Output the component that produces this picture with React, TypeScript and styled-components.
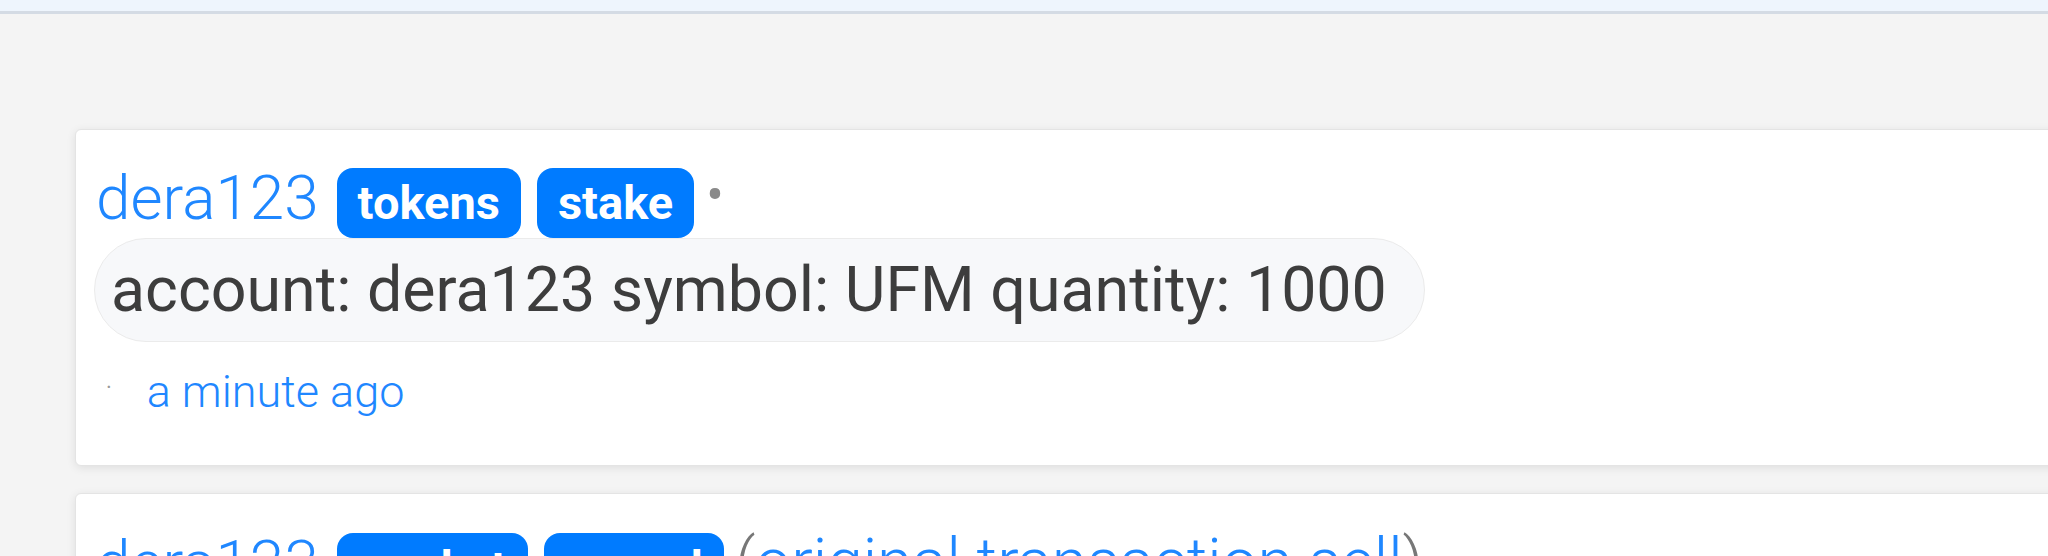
import React from "react";
import styled, { createGlobalStyle } from "styled-components";

const Global = createGlobalStyle`
  html, body { margin: 0; padding: 0; }
  body {
    background: #f4f4f4;
    overflow: hidden;
    font-family: Roboto, "Liberation Sans", Arial, sans-serif;
  }
`;

const TopBar = styled.div`
  height: 11px;
  background: #eef5fd;
  border-bottom: 3px solid #d4dbe4;
`;

const Feed = styled.div`
  display: flex;
  flex-direction: column;
  gap: 27px;
  padding: 115px 0 0 75px;
`;

const Card = styled.div`
  box-sizing: border-box;
  width: 2100px;
  height: 337px;
  flex-shrink: 0;
  background: #fff;
  border: 1px solid #e4e4e4;
  border-radius: 6px;
  box-shadow: 0 2px 10px rgba(0, 0, 0, 0.09);
  padding: 31px 18px 0;
`;

const Header = styled.div`
  display: flex;
  align-items: baseline;
  white-space: nowrap;
`;

const User = styled.a`
  font-size: 62px;
  font-weight: 300;
  color: #1f87ff;
  text-decoration: none;
  margin-left: 2px;
  margin-right: 18px;
`;

const Badge = styled.span`
  display: inline-block;
  background: #007bff;
  color: #fff;
  font-size: 47px;
  font-weight: 700;
  line-height: 54px;
  padding: 8px 21px;
  border-radius: 16px;
  margin-right: 16px;
`;

const Dot = styled.span`
  color: #8a8a8a;
  font-size: 52px;
  margin-left: -4px;
  position: relative;
  top: -6px;
`;

const Note = styled.span`
  font-size: 64px;
  font-weight: 300;
  color: #777;
  margin-left: -5px;
`;

const NoteLink = styled.span`
  color: #1f87ff;
`;

const Memo = styled.div`
  display: inline-block;
  box-sizing: border-box;
  margin-top: 0;
  height: 104px;
  border: 1px solid #ebebeb;
  background: #f7f8fa;
  border-radius: 52px;
  padding: 0 37px 0 16px;
  font-size: 62.7px;
  line-height: 102px;
  color: #3d3d3d;
  white-space: nowrap;
`;

const TimeRow = styled.div`
  display: flex;
  align-items: baseline;
  margin-top: 24px;
  padding-left: 12px;
  line-height: 52px;
`;

const TinyDot = styled.span`
  color: #999;
  font-size: 22px;
  margin-right: 35px;
  position: relative;
  top: -12px;
`;

const Time = styled.a`
  font-size: 45px;
  font-weight: 300;
  color: #1f87ff;
  text-decoration: none;
`;

export default function App() {
  return (
    <>
      <Global />
      <TopBar />
      <Feed>
        <Card>
          <Header>
            <User>dera123</User>
            <Badge>tokens</Badge>
            <Badge>stake</Badge>
            <Dot>•</Dot>
          </Header>
          <div>
            <Memo>account: dera123 symbol: UFM quantity: 1000</Memo>
          </div>
          <TimeRow>
            <TinyDot>·</TinyDot>
            <Time>a minute ago</Time>
          </TimeRow>
        </Card>
        <Card>
          <Header>
            <User>dera123</User>
            <Badge>market</Badge>
            <Badge>cancel</Badge>
            <Note>
              (<NoteLink>original transaction sell</NoteLink>)
            </Note>
          </Header>
        </Card>
      </Feed>
    </>
  );
}
